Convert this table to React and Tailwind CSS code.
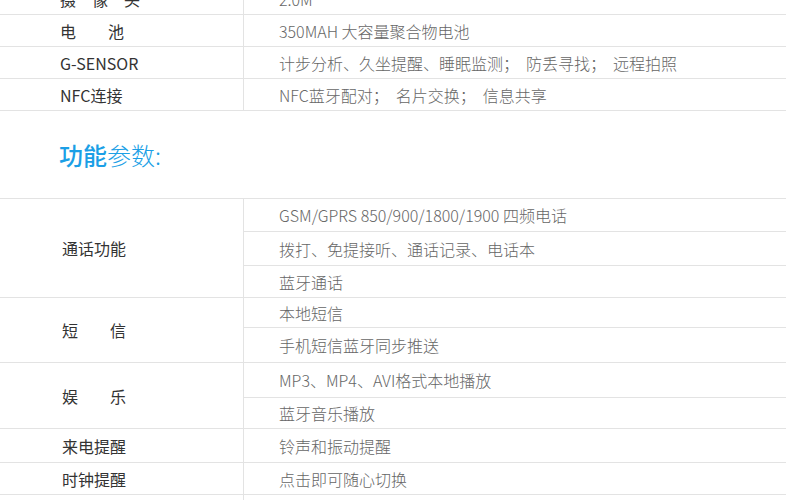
import React from 'react';

const font = { fontFamily: '"Noto Sans CJK SC", "Noto Sans", sans-serif' };

// 上半部分：硬件参数（顶部被裁掉一行）
const hardware = [
    { label: '摄　像　头', value: '2.0M' },
    { label: '电　　池', value: '350MAH 大容量聚合物电池' },
    { label: 'G-SENSOR', value: '计步分析、久坐提醒、睡眠监测；防丢寻找；远程拍照' },
    { label: 'NFC连接', value: 'NFC蓝牙配对；名片交换；信息共享' },
];

// 功能参数：每组左侧一个标签，右侧多行（最后一行的下边线由组自己画）
const features = [
    {
        label: '通话功能',
        rows: [
            { text: 'GSM/GPRS 850/900/1800/1900 四频电话', h: 'h-[33px]' },
            { text: '拨打、免提接听、通话记录、电话本', h: 'h-[34px]' },
            { text: '蓝牙通话', h: 'h-[31px]' },
        ],
    },
    {
        label: '短　　信',
        rows: [
            { text: '本地短信', h: 'h-[30px]' },
            { text: '手机短信蓝牙同步推送', h: 'h-[34px]' },
        ],
    },
    {
        label: '娱　　乐',
        rows: [
            { text: 'MP3、MP4、AVI格式本地播放', h: 'h-[35px]' },
            { text: '蓝牙音乐播放', h: 'h-[30px]' },
        ],
    },
    { label: '来电提醒', rows: [{ text: '铃声和振动提醒', h: 'h-[33px]' }] },
    { label: '时钟提醒', rows: [{ text: '点击即可随心切换', h: 'h-[31px]' }] },
    { label: '', rows: [{ text: '', h: 'h-[31px]' }] },
];

// 分号后面原图留了空隙
const Value = ({ text }) => {
    const parts = text.split('；');
    return (
        <span>
            {parts.map((p, i) => (
                <React.Fragment key={i}>
                    {p}
                    {i < parts.length - 1 && <span className="inline-block w-[23px]">；</span>}
                </React.Fragment>
            ))}
        </span>
    );
};

export default function App() {
    return (
        <div className="w-[790px] h-[500px] overflow-hidden bg-white" style={font}>
            {/* 硬件参数表 */}
            <div className="w-[786px] -mt-[17px]">
                {hardware.map((item, i) => (
                    <div key={i} className="flex h-[32px] border-b border-[#e3e3e3]">
                        <div className="w-[244px] shrink-0 border-r border-[#e3e3e3] pl-[60px] flex items-center text-[16px] text-[#333]">
                            {item.label}
                        </div>
                        <div className="flex-1 pl-[35px] flex items-center text-[16px] font-light text-[#666]">
                            <Value text={item.value} />
                        </div>
                    </div>
                ))}
            </div>

            {/* 标题 */}
            <div className="h-[87px] flex items-center pl-[59px]">
                <h2 className="text-[24px] leading-none text-[#1b9fe6]">
                    <span className="font-medium">功能</span>
                    <span className="font-light">参数:</span>
                </h2>
            </div>

            {/* 功能参数表 */}
            <div className="w-[786px] border-t border-[#e3e3e3]">
                {features.map((group, gi) => (
                    <div key={gi} className="flex border-b border-[#e3e3e3]">
                        <div className="w-[244px] shrink-0 border-r border-[#e3e3e3] pl-[62px] flex items-center text-[16px] text-[#333]">
                            {group.label}
                        </div>
                        <div className="flex-1 flex flex-col">
                            {group.rows.map((row, ri) => (
                                <div
                                    key={ri}
                                    className={`${row.h} ${ri < group.rows.length - 1 ? 'border-b border-[#e3e3e3]' : ''} pl-[35px] flex items-center text-[16px] font-light text-[#666]`}
                                >
                                    {row.text}
                                </div>
                            ))}
                        </div>
                    </div>
                ))}
            </div>
        </div>
    );
}
